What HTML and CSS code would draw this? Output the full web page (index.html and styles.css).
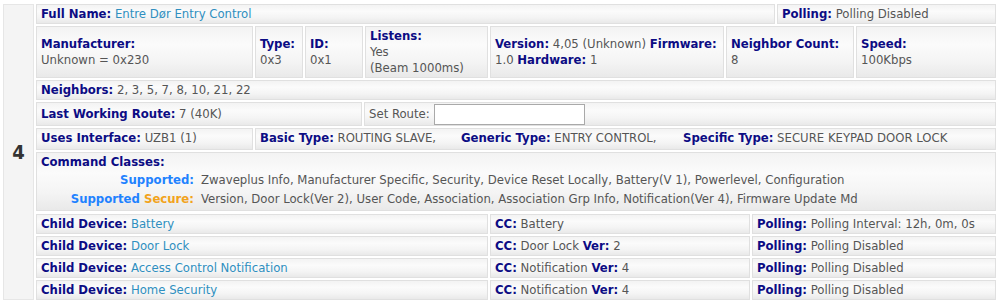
FILE: index.html
```html
<!DOCTYPE html>
<html lang="en">
<head>
  <meta charset="UTF-8" />
  <meta name="viewport" content="width=device-width, initial-scale=1" />
  <title>Z-Wave Node 4</title>
  <link rel="stylesheet" href="styles.css">
</head>
<body>
  <div class="node">
    <div class="node-id">4</div>
    <div class="node-info">
      <div class="row">
        <div class="cell grow"><b>Full Name:</b> <a href="#">Entre Dør Entry Control</a></div>
        <div class="cell w-poll"><b>Polling:</b> Polling Disabled</div>
      </div>
      <div class="row tall">
        <div class="cell w-manuf"><div><b>Manufacturer:</b><br>Unknown = 0x230</div></div>
        <div class="cell w-type"><div><b>Type:</b><br>0x3</div></div>
        <div class="cell w-id"><div><b>ID:</b><br>0x1</div></div>
        <div class="cell w-listen"><div><b>Listens:</b><br>Yes<br>(Beam 1000ms)</div></div>
        <div class="cell w-version"><div><b>Version:</b> 4,05 (Unknown) <b>Firmware:</b><br>1.0 <b>Hardware:</b> 1</div></div>
        <div class="cell w-ncount"><div><b>Neighbor Count:</b><br>8</div></div>
        <div class="cell grow"><div><b>Speed:</b><br>100Kbps</div></div>
      </div>
      <div class="row">
        <div class="cell grow"><b>Neighbors:</b> 2, 3, 5, 7, 8, 10, 21, 22</div>
      </div>
      <div class="row route-row">
        <div class="cell w-route"><span><b>Last Working Route:</b> 7 (40K)</span></div>
        <div class="cell grow set-route"><span>Set Route:</span><input type="text" class="route-input"></div>
      </div>
      <div class="row type-row">
        <div class="cell w-manuf"><b>Uses Interface:</b> UZB1 (1)</div>
        <div class="cell grow">
          <span class="type basic"><b>Basic Type:</b> ROUTING SLAVE,</span><span class="type generic"><b>Generic Type:</b> ENTRY CONTROL,</span><span class="type"><b>Specific Type:</b> SECURE KEYPAD DOOR LOCK</span>
        </div>
      </div>
      <div class="row">
        <div class="cell grow">
          <b>Command Classes:</b>
          <div class="cc-list">
            <div class="cc-label"><span class="sup">Supported:</span></div>
            <div>Zwaveplus Info, Manufacturer Specific, Security, Device Reset Locally, Battery(V 1), Powerlevel, Configuration</div>
            <div class="cc-label"><span class="sup">Supported</span> <span class="sec">Secure:</span></div>
            <div>Version, Door Lock(Ver 2), User Code, Association, Association Grp Info, Notification(Ver 4), Firmware Update Md</div>
          </div>
        </div>
      </div>
      <div class="children" id="children"></div>
    </div>
  </div>

  <script>
    // child devices exposed by the node
    const children = [
      { name: "Battery", cc: "Battery", ver: null, polling: "Polling Interval: 12h, 0m, 0s" },
      { name: "Door Lock", cc: "Door Lock", ver: 2, polling: "Polling Disabled" },
      { name: "Access Control Notification", cc: "Notification", ver: 4, polling: "Polling Disabled" },
      { name: "Home Security", cc: "Notification", ver: 4, polling: "Polling Disabled" }
    ];

    const box = document.getElementById("children");
    children.forEach(c => {
      const row = document.createElement("div");
      row.className = "row";
      row.innerHTML = `
        <div class="cell w-child"><b>Child Device:</b> <a href="#">${c.name}</a></div>
        <div class="cell w-cc"><b>CC:</b> ${c.cc}${c.ver ? ` <b>Ver:</b> ${c.ver}` : ""}</div>
        <div class="cell grow"><b>Polling:</b> ${c.polling}</div>
      `;
      box.appendChild(row);
    });
  </script>
</body>
</html>
```
FILE: styles.css
```css
body {
  margin: 0;
  background: #fff;
  font-family: "DejaVu Sans Condensed", "DejaVu Sans", sans-serif;
  font-size: 13px;
  line-height: 16px;
  color: #555;
}
b {
  color: #0c0c84;
}
a {
  color: #2f8fc0;
  text-decoration: none;
}
.node {
  display: flex;
  gap: 2px;
  padding: 4px 4px 0 3px;
}
.node-id {
  width: 29px;
  flex: none;
  display: flex;
  align-items: center;
  justify-content: center;
  background: #f4f4f4;
  border: 1px solid #e6e6e6;
  font-size: 20px;
  font-weight: bold;
  color: #333;
}
.node-info {
  flex: 1;
  display: flex;
  flex-direction: column;
  gap: 2px;
  min-width: 0;
}
.row {
  display: flex;
  gap: 2px;
}
.cell {
  box-sizing: border-box;
  flex: none;
  padding: 1px 4px;
  border: 1px solid #e0e0e0;
  background: linear-gradient(to bottom, #f3f3f3 0%, #fbfbfb 35%, #f4f4f4 70%, #e9e9e9 100%);
  white-space: nowrap;
}
.tall .cell {
  display: flex;
  align-items: center;
  height: 52px;
}
.route-row .cell {
  height: 24px;
  display: flex;
  align-items: center;
}
.type-row .cell {
  height: 22px;
}
.grow {
  flex: 1;
  min-width: 0;
}
.w-poll { width: 219px; }
.w-manuf { width: 217px; }
.w-type { width: 48px; }
.w-id { width: 58px; }
.w-listen { width: 123px; }
.w-version { width: 234px; }
.w-ncount { width: 128px; }
.w-route { width: 326px; }
.w-child { width: 452px; }
.w-cc { width: 260px; }

.set-route {
  gap: 4px;
}
.route-input {
  box-sizing: border-box;
  width: 151px;
  height: 21px;
  margin: 0;
  border: 1px solid #a9a9a9;
  background: #fff;
}
.type {
  display: inline-block;
}
.basic { width: 201px; }
.generic { width: 222px; }

.cc-list {
  display: grid;
  grid-template-columns: 153px 1fr;
  column-gap: 7px;
  line-height: 19px;
  padding-bottom: 1px;
}
.cc-label {
  text-align: right;
  font-weight: bold;
}
.sup { color: #1f82ff; }
.sec { color: #f2a31b; }

.children {
  display: flex;
  flex-direction: column;
  gap: 2px;
  margin-top: 1px;
}
```
